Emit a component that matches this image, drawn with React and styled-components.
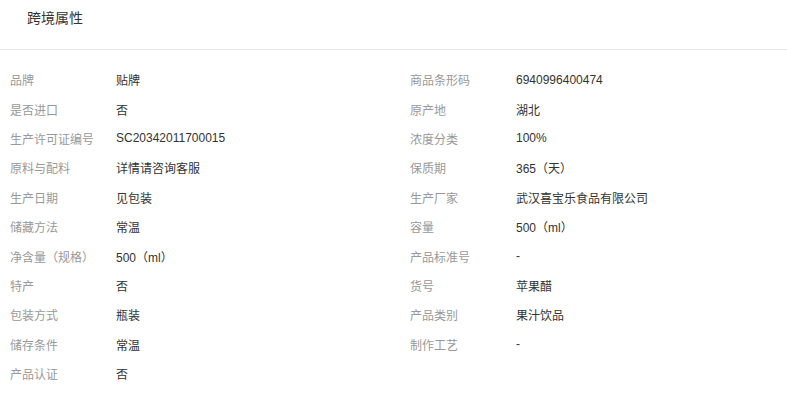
import React from "react";
import styled, { createGlobalStyle } from "styled-components";

const GlobalStyle = createGlobalStyle`
  html, body {
    margin: 0;
    padding: 0;
    background: #fff;
  }
  body {
    font-family: "Liberation Sans", "Noto Sans CJK SC", sans-serif;
  }
`;

const Panel = styled.section`
  width: 787px;
  background: #fff;
`;

const Header = styled.div`
  height: 49px;
  padding-left: 27px;
  border-bottom: 1px solid #e6e6e6;
  box-sizing: content-box;
`;

const Title = styled.h3`
  margin: 0;
  font-size: 14px;
  font-weight: normal;
  line-height: 36px;
  color: #333;
`;

const AttrGrid = styled.div`
  display: grid;
  grid-template-columns: 400px 1fr;
  grid-auto-rows: 29.4px;
  padding-top: 15px;
`;

const Item = styled.div`
  display: flex;
  align-items: center;
  padding-left: 10px;
  font-size: 12px;
  white-space: nowrap;
`;

const Label = styled.span`
  width: 106px;
  flex: none;
  color: #999;
`;

const Value = styled.span`
  color: #333;
`;

const attrs = [
  ["品牌", "贴牌"],
  ["商品条形码", "6940996400474"],
  ["是否进口", "否"],
  ["原产地", "湖北"],
  ["生产许可证编号", "SC20342011700015"],
  ["浓度分类", "100%"],
  ["原料与配料", "详情请咨询客服"],
  ["保质期", "365（天）"],
  ["生产日期", "见包装"],
  ["生产厂家", "武汉喜宝乐食品有限公司"],
  ["储藏方法", "常温"],
  ["容量", "500（ml）"],
  ["净含量（规格）", "500（ml）"],
  ["产品标准号", "-"],
  ["特产", "否"],
  ["货号", "苹果醋"],
  ["包装方式", "瓶装"],
  ["产品类别", "果汁饮品"],
  ["储存条件", "常温"],
  ["制作工艺", "-"],
  ["产品认证", "否"],
];

export default function App() {
  return (
    <>
      <GlobalStyle />
      <Panel>
        <Header>
          <Title>跨境属性</Title>
        </Header>
        <AttrGrid>
          {attrs.map(([k, v]) => (
            <Item key={k}>
              <Label>{k}</Label>
              <Value>{v}</Value>
            </Item>
          ))}
        </AttrGrid>
      </Panel>
    </>
  );
}
